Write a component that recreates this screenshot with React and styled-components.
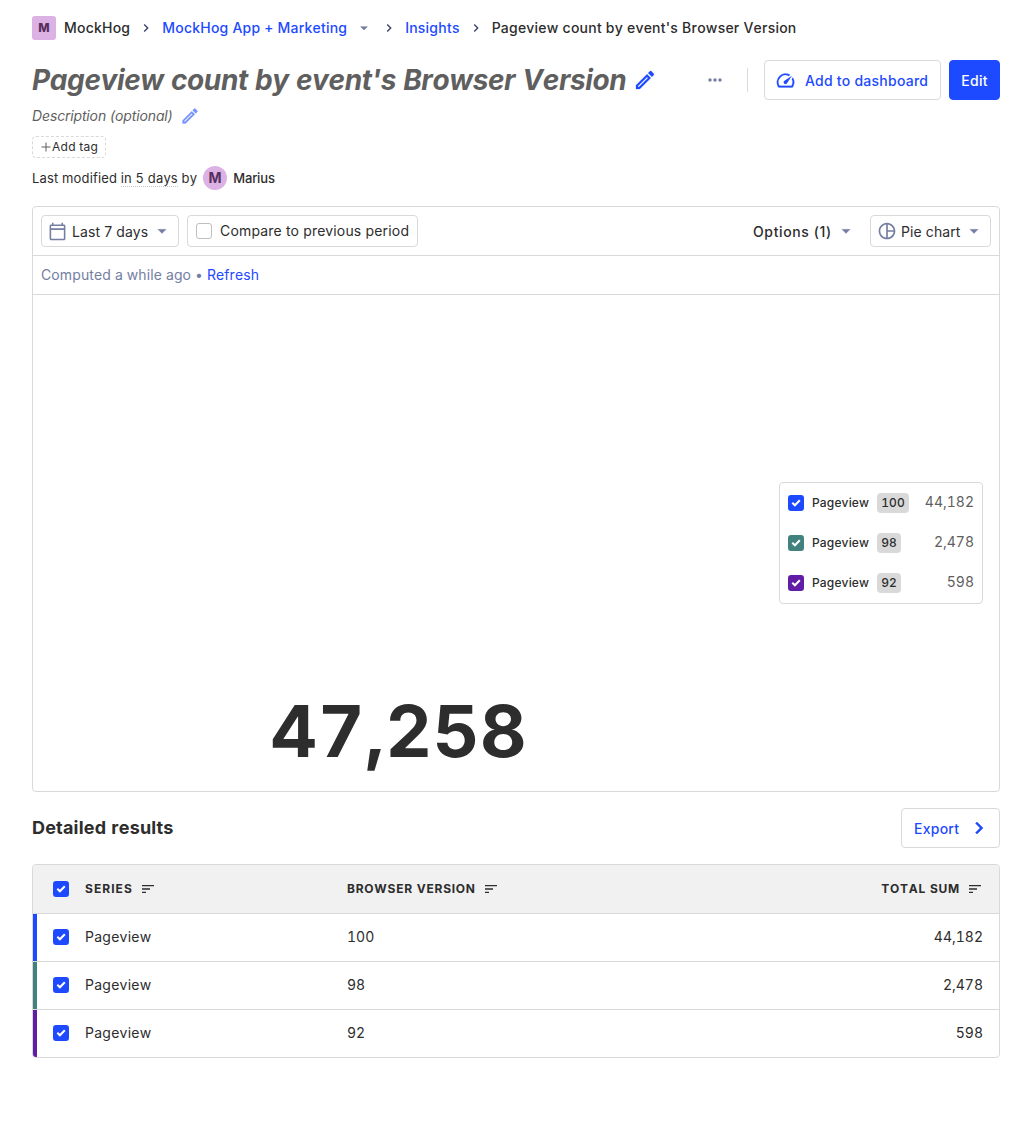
import React from "react";
import styled, { createGlobalStyle } from "styled-components";

const color = {
  primary: "#1d4aff",
  text: "#2d2d2d",
  muted: "#5f5f5f",
  alt: "#747ea1",
  border: "#d9d9d9",
  teal: "#42827e",
  purple: "#621da6",
};

const GlobalStyle = createGlobalStyle`
  *, *::before, *::after { box-sizing: border-box; }
  body {
    margin: 0;
    background: #fff;
    color: ${color.text};
    font-family: Inter, "Liberation Sans", sans-serif;
    font-size: 14px;
    font-kerning: none;
    font-variant-numeric: tabular-nums;
    line-height: 22px;
  }
  h1, h2 { margin: 0; }
  button { font-family: inherit; cursor: pointer; }
`;

const paths = {
  pencil:
    "M14.06 9.02l.92.92L5.92 19H5v-.92l9.06-9.06M17.66 3c-.25 0-.51.1-.7.29l-1.83 1.83 3.75 3.75 1.83-1.83c.39-.39.39-1.02 0-1.41l-2.34-2.34c-.2-.2-.45-.29-.71-.29zm-3.6 3.19L3 17.25V21h3.75L17.81 9.94l-3.75-3.75z",
  gauge:
    "M20.38 8.57l-1.23 1.85a8 8 0 0 1-.22 7.58H5.07A8 8 0 0 1 15.58 6.85l1.85-1.23A10 10 0 0 0 3.35 19a2 2 0 0 0 1.72 1h13.85a2 2 0 0 0 1.74-1 10 10 0 0 0-.27-10.44zm-9.79 6.84a2 2 0 0 0 2.83 0l5.66-8.49-8.49 5.66a2 2 0 0 0 0 2.83z",
  calendar:
    "M20 3h-1V1h-2v2H7V1H5v2H4c-1.1 0-2 .9-2 2v16c0 1.1.9 2 2 2h16c1.1 0 2-.9 2-2V5c0-1.1-.9-2-2-2zm0 18H4V10h16v11zm0-13H4V5h16v3z",
  pie:
    "M12 2C6.48 2 2 6.48 2 12s4.48 10 10 10 10-4.48 10-10S17.52 2 12 2zm1 2.07c3.61.45 6.48 3.33 6.93 6.93H13V4.07zM4 12c0-4.06 3.07-7.44 7-7.93v15.87c-3.93-.5-7-3.88-7-7.94zm9 7.93V13h6.93c-.45 3.61-3.32 6.48-6.93 6.93z",
  caret: "M7 10l5 5 5-5H7z",
  chevron: "M8.59 16.59L13.17 12 8.59 7.41 10 6l6 6-6 6-1.41-1.41z",
  sort: "M3 18h6v-2H3v2zM3 6v2h18V6H3zm0 7h12v-2H3v2z",
  ellipsis:
    "M6 10c-1.1 0-2 .9-2 2s.9 2 2 2 2-.9 2-2-.9-2-2-2zm12 0c-1.1 0-2 .9-2 2s.9 2 2 2 2-.9 2-2-.9-2-2-2zm-6 0c-1.1 0-2 .9-2 2s.9 2 2 2 2-.9 2-2-.9-2-2-2z",
  plus: "M21 13h-8v8h-2v-8H3v-2h8V3h2v8h8z",
};

const Svg = styled.svg`
  display: block;
  flex: none;
  width: ${(p) => p.$size}px;
  height: ${(p) => p.$size}px;
  fill: ${(p) => p.$color || "currentColor"};
  stroke: ${(p) => p.$color || "currentColor"};
  stroke-width: ${(p) => p.$bold || 0};
  opacity: ${(p) => p.$opacity || 1};
`;

const Icon = ({ name, size = 20, tint, opacity, bold }) => (
  <Svg viewBox="0 0 24 24" $size={size} $color={tint} $opacity={opacity} $bold={bold}>
    <path d={paths[name]} />
  </Svg>
);

const Page = styled.main`
  width: 1032px;
  min-height: 1122px;
  padding: 16px 32px 0;
`;

const Breadcrumbs = styled.nav`
  display: flex;
  align-items: center;
  gap: 8px;
  height: 24px;
  font-weight: 500;
  letter-spacing: 0.22px;
  white-space: nowrap;
`;

const Crumb = styled.span`
  display: flex;
  align-items: center;
  gap: 9px;
  padding-right: ${(p) => (p.$menu ? 1 : 0)}px;
  color: ${(p) => (p.$link ? color.primary : color.text)};
`;

const Lettermark = styled.span`
  display: flex;
  align-items: center;
  justify-content: center;
  flex: none;
  width: 24px;
  height: 24px;
  border-radius: ${(p) => (p.$round ? "50%" : "3px")};
  background: #dcb1e3;
  color: #572e5e;
  font-size: ${(p) => (p.$round ? 14 : 12)}px;
  font-weight: ${(p) => (p.$round ? 700 : 800)};
  letter-spacing: 0;
`;

const TitleRow = styled.header`
  display: flex;
  align-items: center;
  height: 40px;
  margin-top: 20px;
`;

const Title = styled.h1`
  margin-right: 7px;
  color: ${color.muted};
  font-size: 28px;
  font-weight: 700;
  font-style: italic;
  letter-spacing: -0.37px;
  line-height: 40px;
  white-space: nowrap;
`;

const TitleActions = styled.div`
  display: flex;
  align-items: center;
  margin-left: auto;
`;

const Divider = styled.span`
  width: 1px;
  height: 24px;
  margin: 0 16px 0 22px;
  background: ${color.border};
`;

const Button = styled.button`
  display: flex;
  align-items: center;
  justify-content: center;
  width: ${(p) => p.$width}px;
  height: 40px;
  padding: 1px 0 0;
  border: 1px solid ${(p) => (p.$primary ? color.primary : color.border)};
  border-radius: 4px;
  background: ${(p) => (p.$primary ? color.primary : "#fff")};
  color: ${(p) => (p.$primary ? "#fff" : color.primary)};
  font-size: 14px;
  font-weight: 500;
  letter-spacing: 0.25px;
  white-space: nowrap;
`;

const DashboardButton = styled(Button)`
  justify-content: flex-start;
  margin-right: 8px;
  padding: 1px 0 0 10px;
  gap: 9px;
`;

const Description = styled.div`
  display: flex;
  align-items: center;
  gap: 7px;
  height: 24px;
  margin-top: 4px;
  color: ${color.muted};
  font-style: italic;
  letter-spacing: -0.13px;
`;

const AddTag = styled.button`
  display: flex;
  align-items: center;
  width: 74px;
  height: 22px;
  margin-top: 8px;
  padding: 0 0 0 7px;
  border: 1px dashed ${color.border};
  border-radius: 4px;
  background: #fff;
  color: ${color.text};
  font-size: 12px;
  letter-spacing: 0.25px;
  line-height: 20px;
  white-space: nowrap;
`;

const Modified = styled.div`
  display: flex;
  align-items: center;
  height: 24px;
  margin-top: 8px;
  font-size: 13px;
  letter-spacing: 0.16px;
  white-space: pre;
`;

const Dotted = styled.span`
  height: 17px;
  border-bottom: 1px dotted #c4c4c4;
  line-height: 17px;
`;

const Author = styled.span`
  display: flex;
  align-items: center;
  gap: 6px;
  margin-left: 6px;
  font-weight: 500;
  letter-spacing: -0.1px;
`;

const Card = styled.section`
  display: flex;
  flex-direction: column;
  height: 586px;
  margin-top: 16px;
  border: 1px solid ${color.border};
  border-radius: 4px;
`;

const Controls = styled.div`
  display: flex;
  align-items: center;
  gap: 8px;
  height: 49px;
  padding: 0 8px;
  border-bottom: 1px solid ${color.border};
`;

const Control = styled.button`
  display: flex;
  align-items: center;
  width: ${(p) => p.$width}px;
  height: 32px;
  margin-left: ${(p) => (p.$pushed ? "auto" : 0)};
  padding: 0 0 0 6px;
  border: 1px solid ${(p) => (p.$plain ? "transparent" : color.border)};
  border-radius: 4px;
  background: #fff;
  color: ${color.text};
  font-size: 14px;
  font-weight: ${(p) => (p.$plain ? 500 : 400)};
  letter-spacing: ${(p) => p.$spacing ?? 0.1}px;
  white-space: nowrap;
`;

const ControlLabel = styled.span`
  margin: ${(p) => p.$top ?? 1}px ${(p) => p.$right ?? 4}px 0 ${(p) => p.$left ?? 5}px;
`;

const EmptyBox = styled.span`
  width: 16px;
  height: 16px;
  margin-left: 2px;
  border: 1px solid #bfbfbf;
  border-radius: 3px;
`;

const Computed = styled.div`
  height: 39px;
  padding: 8px;
  border-bottom: 1px solid ${color.border};
  color: ${color.alt};
  letter-spacing: 0.12px;
`;

const RefreshLink = styled.a`
  color: ${color.primary};
`;

const Chart = styled.div`
  display: flex;
  flex: 1;
  align-items: center;
  padding-right: 16px;
`;

const Figure = styled.div`
  display: flex;
  flex: 1;
  align-items: flex-end;
  justify-content: center;
  align-self: stretch;
  padding: 0 14px 15px 0;
`;

const Total = styled.div`
  font-size: 72px;
  font-weight: 700;
  letter-spacing: 0.8px;
  line-height: 90px;
`;

const Legend = styled.div`
  width: 204px;
  height: 122px;
  border: 1px solid ${color.border};
  border-radius: 4px;
`;

const LegendRow = styled.div`
  display: flex;
  align-items: center;
  gap: 8px;
  height: 40px;
  padding: 0 8px;
  font-size: 12px;
  font-weight: 500;
  letter-spacing: 0.15px;
`;

const Chip = styled.span`
  height: 20px;
  padding: 0 4px;
  border-radius: 4px;
  background: ${color.border};
  line-height: 20px;
`;

const LegendValue = styled.span`
  margin: -2px 0 0 auto;
  color: ${color.muted};
  font-size: 14px;
  font-weight: 400;
  letter-spacing: 0;
`;

const Box = styled.span`
  display: flex;
  flex: none;
  width: 16px;
  height: 16px;
  border-radius: 3px;
  background: ${(p) => p.$color};
`;

const Tick = styled.svg`
  width: 16px;
  height: 16px;
  fill: none;
  stroke: #fff;
  stroke-width: 2;
`;

const Checkbox = ({ tint = color.primary }) => (
  <Box $color={tint}>
    <Tick viewBox="0 0 16 16">
      <path d="M4.3 7.8 6.9 10.3 11.8 5.2" />
    </Tick>
  </Box>
);

const ResultsHeader = styled.div`
  display: flex;
  align-items: center;
  justify-content: space-between;
  margin: 16px 0;
`;

const Heading = styled.h2`
  font-size: 18px;
  font-weight: 700;
  letter-spacing: 0.2px;
  line-height: 24px;
`;

const ExportButton = styled(Button)`
  justify-content: space-between;
  padding: 0 8px 0 12px;
`;

const ExportLabel = styled.span`
  margin-top: 1px;
`;

const Table = styled.div`
  border: 1px solid ${color.border};
  border-radius: 4px;
  overflow: hidden;
`;

const Row = styled.div`
  display: grid;
  grid-template-columns: 314px 1fr 200px;
  align-items: center;
  height: 48px;
  padding-bottom: 1px;
  border-bottom: 1px solid ${color.border};
  box-shadow: inset 4px 0 0 ${(p) => p.$color};

  &:last-child {
    height: 47px;
    border-bottom: 0;
  }
`;

const HeadRow = styled(Row)`
  height: 49px;
  padding-bottom: 0;
  background: #f1f1f1;
  box-shadow: none;
  font-size: 12px;
  font-weight: 700;
  letter-spacing: 0.75px;
`;

const Cell = styled.div`
  display: flex;
  align-items: center;
  gap: 7px;
  justify-content: ${(p) => (p.$end ? "flex-end" : "flex-start")};
  padding-left: ${(p) => (p.$first ? 20 : 0)}px;
  padding-right: ${(p) => (p.$end ? 16 : 0)}px;
`;

const Name = styled.span`
  margin-left: 9px;
  letter-spacing: ${(p) => (p.$heading ? 1.05 : 0.25)}px;
`;

const series = [
  { tint: color.primary, version: "100", total: "44,182" },
  { tint: color.teal, version: "98", total: "2,478" },
  { tint: color.purple, version: "92", total: "598" },
];

export default function App() {
  return (
    <>
      <GlobalStyle />
      <Page>
        <Breadcrumbs>
          <Crumb>
            <Lettermark>M</Lettermark>
          </Crumb>
          <Crumb>MockHog</Crumb>
          <Icon name="chevron" size={16} tint="#35416b" />
          <Crumb $link $menu>
            MockHog App + Marketing
            <Icon name="caret" size={16} tint={color.alt} bold={0.8} />
          </Crumb>
          <Icon name="chevron" size={16} tint="#35416b" />
          <Crumb $link>Insights</Crumb>
          <Icon name="chevron" size={16} tint="#35416b" />
          <Crumb>Pageview count by event's Browser Version</Crumb>
        </Breadcrumbs>

        <TitleRow>
          <Title>Pageview count by event's Browser Version</Title>
          <Icon name="pencil" size={24} tint={color.primary} bold={0.3} />
          <TitleActions>
            <Icon name="ellipsis" tint={color.alt} />
            <Divider />
            <DashboardButton $width={177}>
              <Icon name="gauge" size={21} bold={0.2} />
              Add to dashboard
            </DashboardButton>
            <Button $primary $width={51}>
              Edit
            </Button>
          </TitleActions>
        </TitleRow>

        <Description>
          Description (optional)
          <Icon name="pencil" size={20} tint={color.primary} opacity={0.6} bold={0.3} />
        </Description>

        <AddTag>
          <Icon name="plus" size={12} tint={color.muted} />
          Add tag
        </AddTag>

        <Modified>
          {"Last modified "}
          <Dotted>in 5 days</Dotted>
          {" by"}
          <Author>
            <Lettermark $round>M</Lettermark>
            Marius
          </Author>
        </Modified>

        <Card>
          <Controls>
            <Control $width={138}>
              <Icon name="calendar" size={19} tint={color.alt} />
              <ControlLabel>Last 7 days</ControlLabel>
              <Icon name="caret" tint={color.alt} bold={0.3} />
            </Control>
            <Control $width={231} $spacing={0.17}>
              <EmptyBox />
              <ControlLabel $left={8} $top={-1}>
                Compare to previous period
              </ControlLabel>
            </Control>
            <Control $plain $pushed $width={121} $spacing={0.62}>
              <ControlLabel>Options (1)</ControlLabel>
              <Icon name="caret" tint={color.alt} bold={0.3} />
            </Control>
            <Control $width={121}>
              <Icon name="pie" size={20} tint={color.alt} />
              <ControlLabel $left={4} $right={3}>
                Pie chart
              </ControlLabel>
              <Icon name="caret" tint={color.alt} bold={0.3} />
            </Control>
          </Controls>
          <Computed>
            Computed a while ago • <RefreshLink>Refresh</RefreshLink>
          </Computed>
          <Chart>
            <Figure>
              <Total>47,258</Total>
            </Figure>
            <Legend>
              {series.map((s) => (
                <LegendRow key={s.version}>
                  <Checkbox tint={s.tint} />
                  Pageview
                  <Chip>{s.version}</Chip>
                  <LegendValue>{s.total}</LegendValue>
                </LegendRow>
              ))}
            </Legend>
          </Chart>
        </Card>

        <ResultsHeader>
          <Heading>Detailed results</Heading>
          <ExportButton $width={99}>
            <ExportLabel>Export</ExportLabel>
            <Icon name="chevron" size={24} bold={0.5} />
          </ExportButton>
        </ResultsHeader>

        <Table>
          <HeadRow>
            <Cell $first>
              <Checkbox />
              <Name $heading>SERIES</Name>
              <Icon name="sort" size={16} />
            </Cell>
            <Cell>
              BROWSER VERSION
              <Icon name="sort" size={16} />
            </Cell>
            <Cell $end>
              TOTAL SUM
              <Icon name="sort" size={16} />
            </Cell>
          </HeadRow>
          {series.map((s) => (
            <Row key={s.version} $color={s.tint}>
              <Cell $first>
                <Checkbox />
                <Name>Pageview</Name>
              </Cell>
              <Cell>{s.version}</Cell>
              <Cell $end>{s.total}</Cell>
            </Row>
          ))}
        </Table>
      </Page>
    </>
  );
}
